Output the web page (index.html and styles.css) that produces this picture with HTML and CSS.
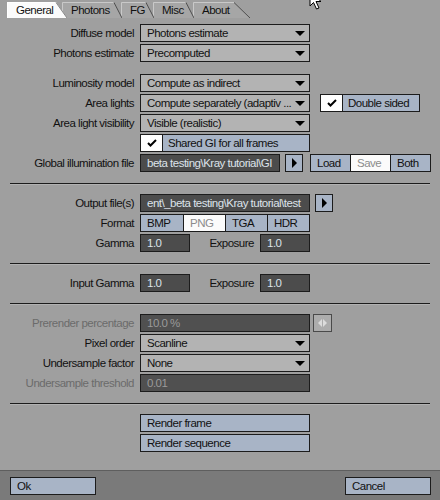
FILE: index.html
```html
<!DOCTYPE html>
<html>
<head>
<meta charset="utf-8">
<title>Kray General</title>
<link rel="stylesheet" href="styles.css">
</head>
<body>
<div class="window">
  <div class="tabs">
    <div class="tab tab-general active">
      <svg class="tab-shape" width="60" height="16"><polygon class="tab-fill" points="0,16 0,0 49,0 60,16"/><polyline class="tab-hi" points="0.5,16 0.5,0.5 49,0.5"/><line class="tab-slant" x1="49" y1="0.5" x2="60" y2="16"/></svg>
      <span class="tab-text">General</span>
    </div>
    <div class="tab tab-photons">
      <svg class="tab-shape" width="60" height="16"><polygon class="tab-fill" points="0,16 0,0 52,0 60,16"/><polyline class="tab-hi" points="0.5,16 0.5,0.5 52,0.5"/><line class="tab-slant" x1="52" y1="0.5" x2="60" y2="16"/></svg>
      <span class="tab-text">Photons</span>
    </div>
    <div class="tab tab-fg">
      <svg class="tab-shape" width="33" height="16"><polygon class="tab-fill" points="0,16 0,0 25,0 33,16"/><polyline class="tab-hi" points="0.5,16 0.5,0.5 25,0.5"/><line class="tab-slant" x1="25" y1="0.5" x2="33" y2="16"/></svg>
      <span class="tab-text">FG</span>
    </div>
    <div class="tab tab-misc">
      <svg class="tab-shape" width="41" height="16"><polygon class="tab-fill" points="0,16 0,0 33,0 41,16"/><polyline class="tab-hi" points="0.5,16 0.5,0.5 33,0.5"/><line class="tab-slant" x1="33" y1="0.5" x2="41" y2="16"/></svg>
      <span class="tab-text">Misc</span>
    </div>
    <div class="tab tab-about">
      <svg class="tab-shape" width="57" height="16"><polygon class="tab-fill" points="0,16 0,0 41,0 57,16"/><polyline class="tab-hi" points="0.5,16 0.5,0.5 41,0.5"/><line class="tab-slant" x1="41" y1="0.5" x2="57" y2="16"/></svg>
      <span class="tab-text">About</span>
    </div>
  </div>

  <div class="panel">
    <div class="group">
      <div class="row"><span class="label">Diffuse model</span><div class="dropdown"><span class="dd-text">Photons estimate</span><span class="dd-arrow"></span></div></div>
      <div class="row"><span class="label">Photons estimate</span><div class="dropdown"><span class="dd-text">Precomputed</span><span class="dd-arrow"></span></div></div>
    </div>

    <div class="group group-gap">
      <div class="row"><span class="label">Luminosity model</span><div class="dropdown"><span class="dd-text">Compute as indirect</span><span class="dd-arrow"></span></div></div>
      <div class="row"><span class="label">Area lights</span><div class="dropdown"><span class="dd-text">Compute separately (adaptiv ...</span><span class="dd-arrow"></span></div>
        <div class="check check-double"><span class="check-box"><svg width="10" height="8" viewBox="0 0 10 8"><polyline points="1,4 3.5,6.5 9,1" fill="none" stroke="#000" stroke-width="2"/></svg></span><span class="check-label">Double sided</span></div>
      </div>
      <div class="row"><span class="label">Area light visibility</span><div class="dropdown"><span class="dd-text">Visible (realistic)</span><span class="dd-arrow"></span></div></div>
      <div class="row"><span class="label"></span>
        <div class="check check-wide"><span class="check-box"><svg width="10" height="8" viewBox="0 0 10 8"><polyline points="1,4 3.5,6.5 9,1" fill="none" stroke="#000" stroke-width="2"/></svg></span><span class="check-label">Shared GI for all frames</span></div>
      </div>
      <div class="row"><span class="label">Global illumination file</span>
        <div class="field field-file">beta testing\Kray tutorial\GI</div>
        <div class="arrow-btn arrow-gi"><span class="tri-right"></span></div>
        <div class="segs segs-io">
          <span class="seg seg-io">Load</span><span class="seg seg-io seg-on">Save</span><span class="seg seg-io">Both</span>
        </div>
      </div>
    </div>

    <div class="sep"></div>

    <div class="group">
      <div class="row"><span class="label">Output file(s)</span>
        <div class="field field-wide">ent\_beta testing\Kray tutorial\test</div>
        <div class="arrow-btn arrow-out"><span class="tri-right"></span></div>
      </div>
      <div class="row"><span class="label">Format</span>
        <div class="segs">
          <span class="seg seg-fmt seg-first">BMP</span><span class="seg seg-fmt seg-on">PNG</span><span class="seg seg-fmt">TGA</span><span class="seg seg-fmt">HDR</span>
        </div>
      </div>
      <div class="row"><span class="label">Gamma</span>
        <div class="field field-num">1.0</div>
        <span class="label-mid">Exposure</span>
        <div class="field field-num">1.0</div>
      </div>
    </div>

    <div class="sep"></div>

    <div class="group">
      <div class="row"><span class="label">Input Gamma</span>
        <div class="field field-num">1.0</div>
        <span class="label-mid">Exposure</span>
        <div class="field field-num">1.0</div>
      </div>
    </div>

    <div class="sep"></div>

    <div class="group">
      <div class="row"><span class="label label-off">Prerender percentage</span>
        <div class="field field-wide field-off">10.0 %</div>
        <div class="spin"><span class="spin-l"></span><span class="spin-r"></span></div>
      </div>
      <div class="row"><span class="label">Pixel order</span><div class="dropdown"><span class="dd-text">Scanline</span><span class="dd-arrow"></span></div></div>
      <div class="row"><span class="label">Undersample factor</span><div class="dropdown"><span class="dd-text">None</span><span class="dd-arrow"></span></div></div>
      <div class="row"><span class="label label-off">Undersample threshold</span>
        <div class="field field-wide field-off">0.01</div>
      </div>
    </div>

    <div class="sep"></div>

    <div class="group">
      <div class="row"><span class="label"></span><div class="button button-wide">Render frame</div></div>
      <div class="row"><span class="label"></span><div class="button button-wide">Render sequence</div></div>
    </div>
  </div>

  <div class="footer">
    <div class="button button-foot">Ok</div>
    <div class="button button-foot">Cancel</div>
  </div>

  <svg class="cursor" width="14" height="20" viewBox="0 0 14 20"><polygon points="1,1 1,16 4.5,12.5 7.5,19 10,18 7,11.5 12,11.5" fill="#fff" stroke="#000" stroke-width="1"/></svg>
</div>
</body>
</html>
```

FILE: styles.css
```css
html, body {
  margin: 0;
  padding: 0;
}
body {
  background: #9f9f9f;
  font-family: "Liberation Sans", Arial, sans-serif;
  font-size: 11.5px;
  letter-spacing: -0.5px;
  color: #111;
}
.window {
  position: relative;
  width: 440px;
  height: 500px;
  display: flex;
  flex-direction: column;
  overflow: hidden;
}

/* tabs */
.tabs {
  display: flex;
  height: 16px;
  padding: 2px 0 0 7px;
}
.tab {
  position: relative;
  height: 16px;
  line-height: 16px;
}
.tab-general { width: 60px; z-index: 5; }
.tab-photons { width: 60px; z-index: 4; margin-left: -5px; }
.tab-fg { width: 33px; z-index: 3; margin-left: -1px; }
.tab-misc { width: 41px; z-index: 2; margin-left: -1px; }
.tab-about { width: 57px; z-index: 1; margin-left: -1px; }
.tab-shape {
  position: absolute;
  left: 0;
  top: 0;
}
.tab-fill { fill: #a6a6a6; }
.tab-hi { fill: none; stroke: #c9c9c9; stroke-width: 1; }
.tab-slant { stroke: #4e4e4e; stroke-width: 1; }
.active .tab-fill { fill: #fbfbfb; }
.active .tab-hi { stroke: #ffffff; }
.active .tab-slant { stroke: #8a8a8a; }
.tab-text {
  position: relative;
  padding-left: 9px;
}

/* panel */
.panel {
  padding-top: 6px;
}
.group {
  display: flex;
  flex-direction: column;
  gap: 2px;
}
.group-gap { margin-top: 12px; }
.sep {
  margin: 11px 10px 9px 10px;
  height: 1px;
  background: #1c1c1c;
  border-bottom: 1px solid #b2b2b2;
}
.row {
  display: flex;
  align-items: center;
  height: 18px;
}
.label {
  width: 140px;
  flex: none;
  box-sizing: border-box;
  padding-right: 6px;
  text-align: right;
  white-space: nowrap;
}
.label-off { color: #6b6b6b; }
.label-mid {
  width: 70px;
  flex: none;
  box-sizing: border-box;
  padding-right: 6px;
  text-align: right;
}

/* shared boxes */
.dropdown, .field, .button, .check, .arrow-btn, .seg, .spin {
  box-sizing: border-box;
  height: 18px;
  border: 1px solid #1c1c1c;
  line-height: 16px;
  white-space: nowrap;
  overflow: hidden;
  flex: none;
}
.dropdown {
  width: 170px;
  display: flex;
  align-items: center;
  background: #b3b3b3;
  padding-left: 6px;
}
.dd-text {
  overflow: hidden;
  flex: 1;
}
.dd-arrow {
  flex: none;
  width: 0;
  height: 0;
  margin: 0 4px 0 1px;
  border-left: 5px solid transparent;
  border-right: 5px solid transparent;
  border-top: 5px solid #000;
}

.check {
  display: flex;
  background: #a8b4c6;
}
.check-double { width: 100px; margin-left: 10px; }
.check-wide { width: 170px; }
.check-box {
  width: 21px;
  flex: none;
  background: #fff;
  border-right: 1px solid #1c1c1c;
  display: flex;
  align-items: center;
  justify-content: center;
}
.check-label { padding-left: 5px; }

.field {
  background: #4c4c4c;
  color: #dde3ea;
  padding-left: 6px;
}
.field-file { width: 140px; }
.field-wide { width: 170px; }
.field-num { width: 50px; }
.field-off { color: #9a9a9a; background: #505050; }

.arrow-btn {
  width: 18px;
  background: #a8b4c6;
  display: flex;
  align-items: center;
  justify-content: center;
}
.arrow-gi { margin-left: 5px; }
.arrow-out { margin-left: 5px; }
.tri-right {
  width: 0;
  height: 0;
  border-top: 5px solid transparent;
  border-bottom: 5px solid transparent;
  border-left: 5px solid #000;
}

.segs { display: flex; }
.segs-io { margin-left: 7px; }
.seg {
  background: #a8b4c6;
  padding-left: 6px;
}
.seg + .seg { margin-left: -1px; }
.seg-io { width: 41px; }
.seg-fmt { width: 43px; }
.seg-fmt.seg-first { width: 44px; }
.seg-on {
  background: #fbfbfb;
  color: #8c8c8c;
}

.spin {
  width: 19px;
  margin-left: 3px;
  background: #acacac;
  border-color: #4a4a4a;
  display: flex;
  align-items: center;
  justify-content: center;
  gap: 1px;
}
.spin-l, .spin-r {
  width: 0;
  height: 0;
  border-top: 4px solid transparent;
  border-bottom: 4px solid transparent;
}
.spin-l { border-right: 4px solid #dcdcdc; }
.spin-r { border-left: 4px solid #dcdcdc; }

.button {
  background: #a8b4c6;
  padding-left: 6px;
}
.button-wide { width: 170px; }

/* footer */
.footer {
  margin-top: auto;
  height: 30px;
  box-sizing: border-box;
  border-top: 1px solid #5e5e5e;
  background: #7a7a7a;
  display: flex;
  justify-content: space-between;
  align-items: flex-start;
  padding: 6px 9px 0 10px;
}
.button-foot { width: 86px; }

.cursor {
  position: absolute;
  left: 309px;
  top: -10px;
}
```
